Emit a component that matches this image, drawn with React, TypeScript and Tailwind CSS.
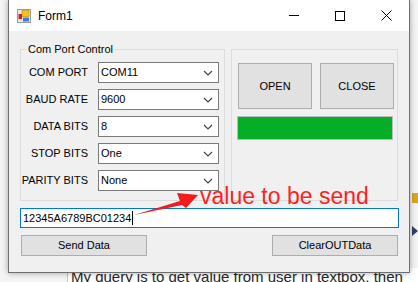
import React from 'react';

const font = { fontFamily: '"Liberation Sans", Arial, sans-serif' };

const Chevron = () => (
  <svg width="10" height="6" viewBox="0 0 10 6" className="shrink-0">
    <path d="M1 1 L5 5 L9 1" fill="none" stroke="#444" strokeWidth="1.2" />
  </svg>
);

const Combo: React.FC<{ value: string }> = ({ value }) => (
  <div className="flex h-[21px] w-[121px] items-center justify-between border border-[#7a7a7a] bg-white pl-[2px] pr-[5px] text-[11px] text-black">
    <span>{value}</span>
    <Chevron />
  </div>
);

const rows: [string, string][] = [
  ['COM PORT', 'COM11'],
  ['BAUD RATE', '9600'],
  ['DATA BITS', '8'],
  ['STOP BITS', 'One'],
  ['PARITY BITS', 'None'],
];

const AppIcon = () => (
  <svg width="14" height="14" viewBox="0 0 14 14">
    <rect x="0.5" y="0.5" width="13" height="13" fill="#e9e9e9" stroke="#9a9a9a" />
    <rect x="5" y="1.5" width="7" height="6" fill="#f6c21a" stroke="#b88a00" strokeWidth="0.6" />
    <rect x="1.5" y="5" width="3.5" height="5" fill="#d82020" />
    <rect x="6" y="8.5" width="6" height="4" fill="#3d7fd8" />
  </svg>
);

export default function App() {
  return (
    <div className="relative h-[282px] w-[418px] overflow-hidden bg-[#f4f4f4]" style={font}>
      {/* form window */}
      <div className="relative z-10 ml-[8px] flex h-[273px] w-[402px] flex-col border border-t-0 border-[#6e6e6e] bg-[#f0f0f0] shadow-[0_0_6px_rgba(0,0,0,0.35)]">
        {/* title bar */}
        <div className="flex h-[31px] items-center bg-white">
          <div className="ml-[8px]">
            <AppIcon />
          </div>
          <span className="ml-[7px] text-[12px] text-black">Form1</span>
          <div className="ml-auto flex h-full items-center">
            <div className="flex w-[46px] items-center justify-center">
              <div className="h-px w-[10px] bg-black" />
            </div>
            <div className="flex w-[46px] items-center justify-center">
              <div className="h-[10px] w-[10px] border border-black" />
            </div>
            <div className="flex w-[46px] items-center justify-center">
              <svg width="11" height="11" viewBox="0 0 11 11">
                <path d="M0.5 0.5 L10.5 10.5 M10.5 0.5 L0.5 10.5" stroke="#000" strokeWidth="1" />
              </svg>
            </div>
          </div>
        </div>

        {/* body */}
        <div className="flex flex-col pl-[11px] pt-[18px]">
          <div className="flex gap-[6px]">
            {/* Com Port Control group */}
            <div className="relative h-[152px] w-[205px] border border-[#dcdcdc] pt-[12px]">
              <span className="absolute left-[6px] top-[-8px] bg-[#f0f0f0] px-[1px] text-[11px] leading-[14px] text-black">
                Com Port Control
              </span>
              <div className="grid grid-cols-[67px_121px] gap-x-[10px] gap-y-[6px]">
                {rows.map(([label, value]) => (
                  <React.Fragment key={label}>
                    <div className="flex h-[21px] items-center justify-end whitespace-nowrap text-[11px] text-black">
                      {label}
                    </div>
                    <Combo value={value} />
                  </React.Fragment>
                ))}
              </div>
            </div>

            {/* open/close group */}
            <div className="h-[152px] w-[167px] border border-[#dcdcdc] pl-[5px] pt-[13px]">
              <div className="ml-[1px] flex gap-[8px]">
                <button className="h-[46px] w-[74px] border border-[#adadad] bg-[#e1e1e1] text-[11px] text-black">
                  OPEN
                </button>
                <button className="h-[46px] w-[74px] border border-[#adadad] bg-[#e1e1e1] text-[11px] text-black">
                  CLOSE
                </button>
              </div>
              <div className="mt-[7px] h-[24px] w-[156px] border border-[#bcbcbc] bg-[#06ad27]" />
            </div>
          </div>

          {/* text to send */}
          <div className="mt-[7px] flex h-[20px] w-[379px] items-center border border-[#0078d7] bg-white pl-[2px] text-[11px] text-black">
            <span>12345A6789BC01234</span>
            <span className="ml-px h-[14px] w-px bg-black" />
          </div>

          <div className="mt-[7px] flex w-[378px] justify-between pl-px">
            <button className="h-[21px] w-[126px] border border-[#adadad] bg-[#e1e1e1] text-[11px] text-black">
              Send Data
            </button>
            <button className="h-[21px] w-[126px] border border-[#adadad] bg-[#e1e1e1] text-[11px] text-black">
              ClearOUTData
            </button>
          </div>
        </div>
      </div>

      {/* page behind the window */}
      <div className="flex h-[9px]">
        <div className="w-[67px] bg-[#f4f4f4]" />
        <div className="w-px bg-[#c8c8c8]" />
        <div className="-mt-[5px] flex-1 whitespace-nowrap bg-white pl-[3px] text-[15px] leading-[18px] text-[#242729]">
          My query is to get value from user in textbox, then
        </div>
      </div>

      {/* background app icons at the right edge */}
      <div className="absolute left-[412px] top-[193px] h-[10px] w-[8px] rounded-[1px] bg-[#d9a520]" />
      <div className="absolute left-[412px] top-[226px] h-0 w-0 border-y-[5px] border-l-[6px] border-y-transparent border-l-[#2b3f6b]" />

      {/* annotation */}
      <svg className="absolute left-0 top-0 z-20" width="418" height="282">
        <polygon points="134,215 180,201 177,193 198,195 186,208 182,205" fill="#f21b1b" />
      </svg>
      <span className="absolute left-[200px] top-[185px] z-20 whitespace-nowrap text-[23px] leading-[23px] text-[#ff1f1f]">
        value to be send
      </span>
    </div>
  );
}
